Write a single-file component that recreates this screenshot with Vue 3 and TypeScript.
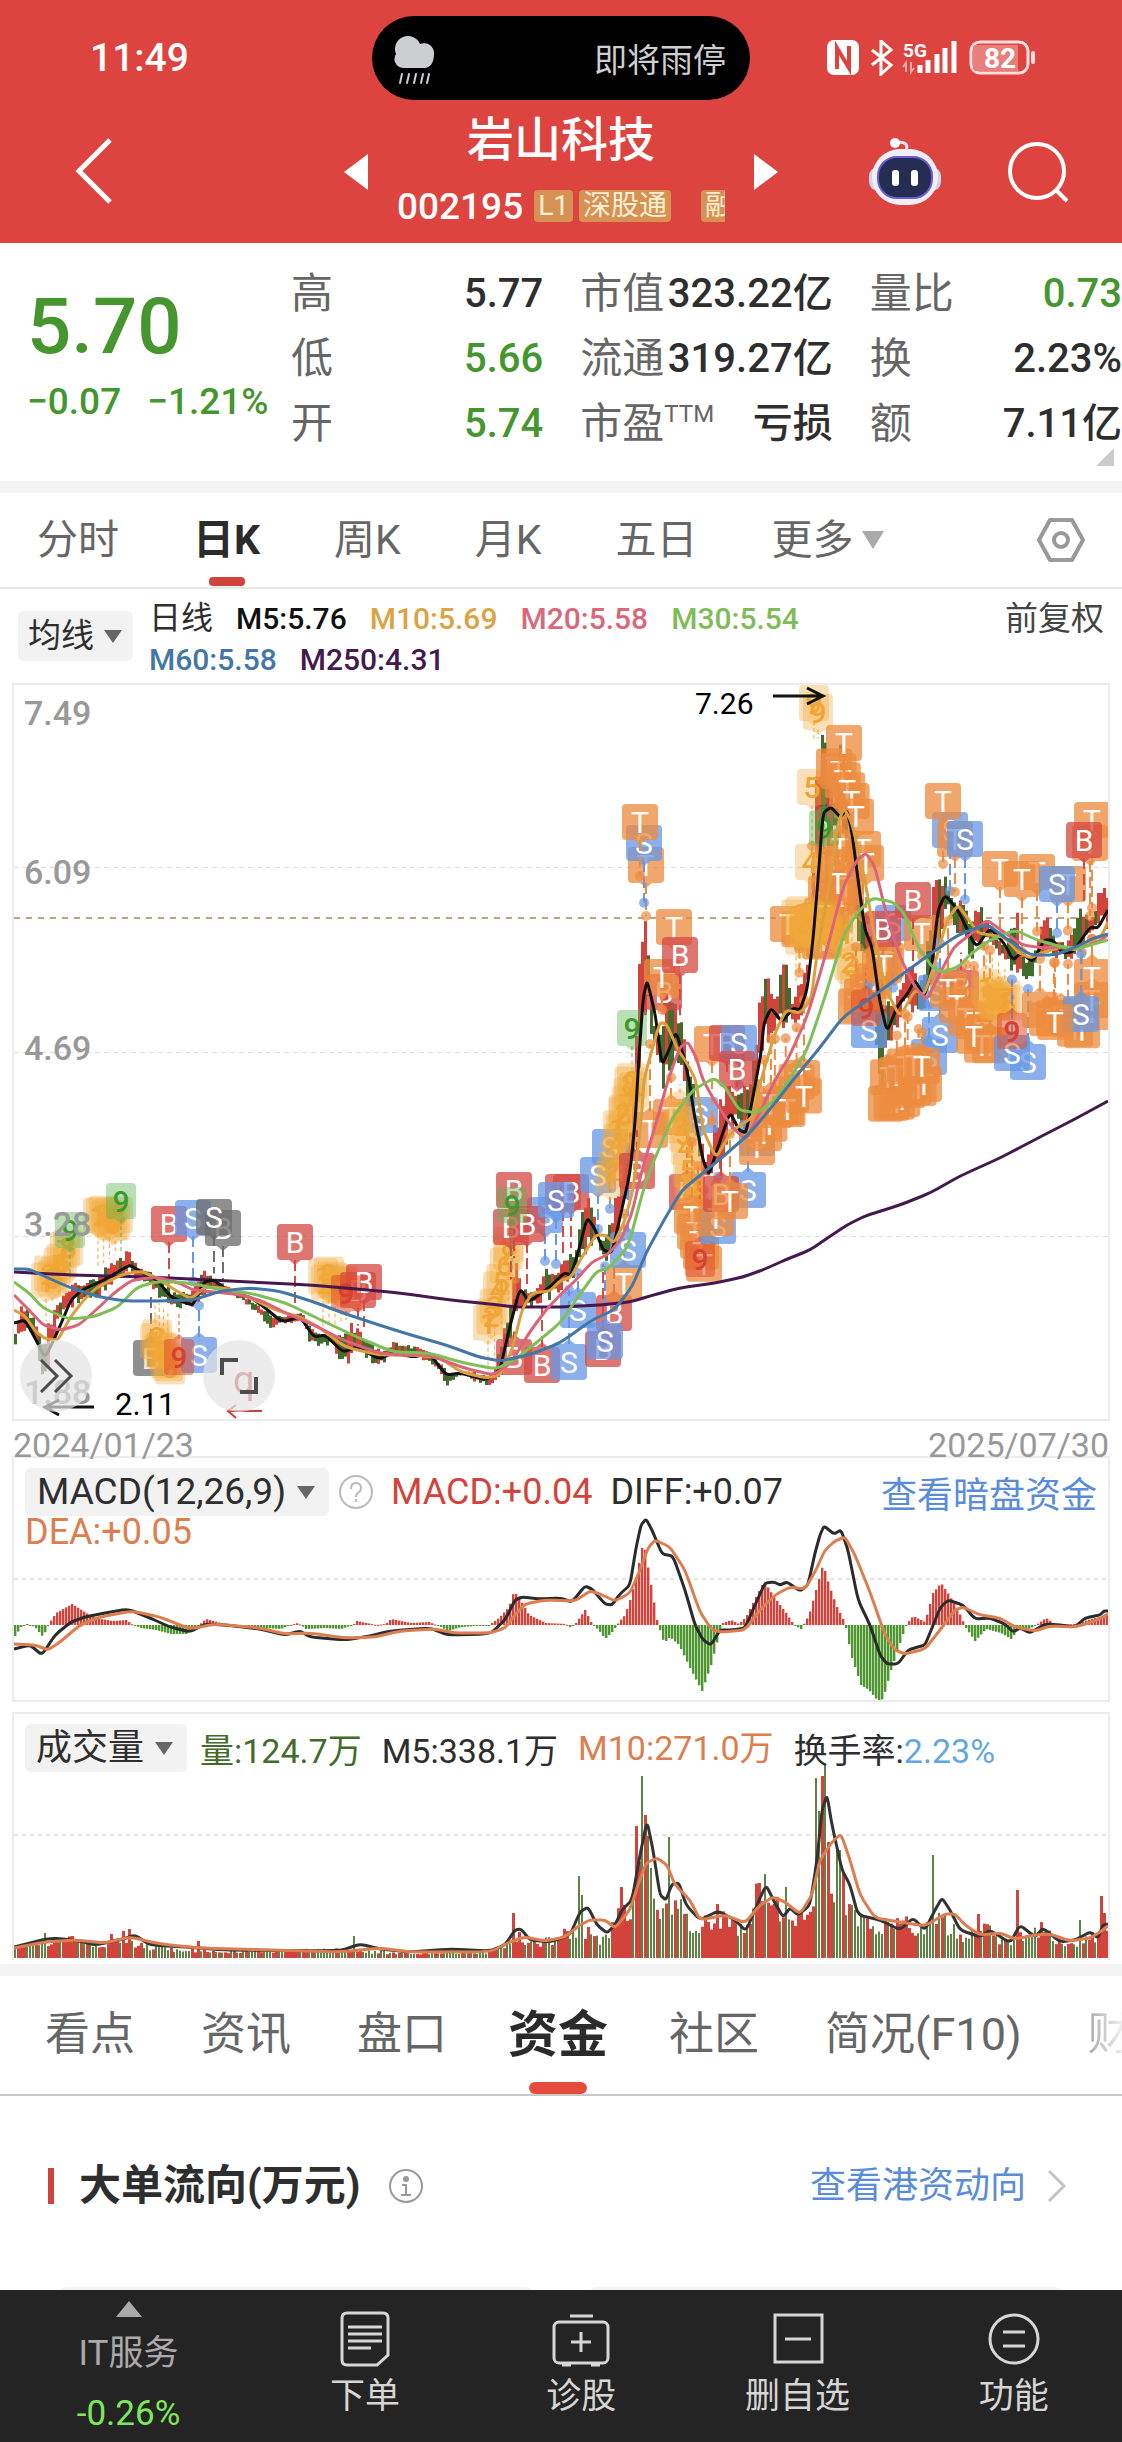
<script setup lang="ts">
type Point = [number, number]
type Kind = 'trade' | 'buy' | 'sell' | 'gray' | 'count' | 'up' | 'down'
interface Pin { x: number; y: number; label: string; kind: Kind; stem: boolean }

/* Turns "x,y x,y ..." into points. */
const parse = (text: string): Point[] =>
  text.trim().split(/\s+/).map((pair) => pair.split(',').map(Number) as Point)

const at = (points: Point[], x: number): number => {
  if (x <= points[0][0]) return points[0][1]
  for (let i = 1; i < points.length; i++) {
    const [x1, y1] = points[i]
    if (x <= x1) {
      const [x0, y0] = points[i - 1]
      return y0 + ((y1 - y0) * (x - x0)) / (x1 - x0)
    }
  }
  return points[points.length - 1][1]
}

const noise = (seed: number): number => {
  const v = Math.sin(seed * 127.1 + 11.7) * 43758.5453
  return v - Math.floor(v)
}

/* Smooths a series with short quadratic joins at its corners. */
const curve = (points: Point[]): string => {
  let d = `M${points[0][0]} ${points[0][1]}`
  for (let i = 1; i < points.length - 1; i++) {
    const [px, py] = points[i - 1]
    const [x, y] = points[i]
    const [nx, ny] = points[i + 1]
    d += ` L${(x * 3 + px) / 4} ${(y * 3 + py) / 4} Q${x} ${y} ${(x * 3 + nx) / 4} ${(y * 3 + ny) / 4}`
  }
  const last = points[points.length - 1]
  return `${d} L${last[0]} ${last[1]}`
}

const ma5 = parse(`14,1323 25,1320 36,1340 45,1358 57,1333 71,1300 82,1290 104,1280 121,1270 130,1265 143,1273 157,1280 171,1297 186,1303 193,1305 204,1282 214,1280 229,1292 250,1297 264,1307 282,1322 300,1317 314,1337 325,1335 343,1352 357,1347 379,1359 393,1353 414,1357 429,1353 446,1375 461,1373 486,1380 500,1370 509,1330 520,1288 529,1302 550,1287 564,1273 571,1275 578,1253 587,1218 594,1227 603,1250 612,1253 621,1213 630,1173 635,1123 639,1057 643,1000 647,980 655,1013 662,1065 669,1050 676,1032 684,1057 689,1080 694,1113 703,1160 709,1175 718,1147 730,1112 739,1130 746,1133 753,1097 761,1053 764,1023 771,1008 782,1022 793,1008 800,1010 807,990 813,940 818,880 823,813 831,807 840,817 847,810 852,833 859,887 865,930 872,947 879,997 887,1032 897,1007 908,993 915,980 924,997 931,973 938,910 945,895 958,910 976,948 990,928 1004,943 1013,960 1021,953 1033,962 1044,940 1053,940 1062,953 1073,952 1090,927 1098,928 1108,910`)
const ma10 = parse(`14,1310 25,1316 36,1332 46,1339 58,1340 70,1318 82,1302 96,1288 121,1275 140,1271 157,1278 175,1290 191,1299 205,1287 225,1288 250,1298 275,1310 300,1317 320,1328 345,1347 379,1355 414,1355 440,1358 461,1372 486,1378 500,1375 512,1350 522,1310 532,1293 550,1291 560,1281 571,1277 582,1257 596,1235 605,1235 614,1243 624,1223 633,1190 641,1123 644,1080 650,1057 660,1022 667,1025 678,1050 685,1060 696,1080 703,1130 716,1158 728,1137 736,1128 753,1117 761,1080 775,1033 786,1010 800,1013 811,1000 818,947 829,887 838,823 844,808 852,823 865,880 875,940 886,990 900,1017 915,990 924,995 935,963 947,920 958,905 969,920 978,933 990,935 1004,937 1019,953 1030,958 1044,952 1062,947 1076,950 1090,940 1101,937 1108,922`)
const ma20 = parse(`14,1295 29,1310 43,1325 61,1330 79,1325 96,1310 114,1293 132,1280 157,1277 179,1283 193,1290 214,1292 243,1295 264,1302 286,1313 314,1325 343,1340 379,1353 400,1355 429,1355 464,1368 493,1375 511,1363 529,1333 546,1310 560,1295 574,1282 592,1262 607,1255 621,1240 632,1213 642,1170 657,1120 668,1080 680,1047 688,1042 696,1057 703,1080 714,1100 732,1127 746,1140 761,1110 775,1080 789,1057 807,1017 825,957 843,887 857,860 866,853 875,867 886,913 900,957 915,987 927,1000 940,973 954,947 972,933 987,920 1001,930 1022,945 1044,948 1062,947 1080,948 1098,942 1108,935`)
const ma30 = parse(`14,1282 29,1293 43,1308 68,1319 93,1317 118,1307 136,1288 154,1282 179,1282 200,1285 221,1290 250,1293 286,1303 321,1320 357,1337 393,1352 429,1353 464,1363 496,1369 514,1360 536,1343 560,1323 578,1297 596,1272 610,1267 628,1247 646,1180 671,1120 693,1090 714,1078 725,1087 739,1110 757,1113 775,1100 789,1080 807,1050 825,997 843,937 857,913 872,898 893,902 904,913 918,947 933,968 943,972 958,967 972,953 990,940 1015,930 1037,940 1062,947 1080,948 1108,940`)
const ma60 = parse(`14,1269 29,1269 46,1277 71,1288 100,1297 125,1301 157,1301 193,1300 221,1291 250,1288 279,1291 314,1302 343,1313 379,1325 411,1335 446,1345 479,1357 500,1361 529,1355 560,1343 592,1320 614,1310 632,1287 646,1253 664,1220 682,1190 703,1173 725,1155 750,1133 775,1103 793,1080 818,1050 843,1017 875,995 904,973 933,952 958,935 987,924 1004,937 1030,955 1055,955 1076,947 1094,938 1108,934`)
const ma250 = parse(`14,1272 71,1275 150,1277 230,1281 310,1285 357,1289 400,1293 450,1300 490,1304 515,1307 560,1307 600,1305 630,1302 650,1296 679,1288 715,1283 743,1277 765,1269 785,1260 810,1250 829,1237 847,1225 865,1216 900,1205 930,1193 960,1176 1000,1158 1040,1137 1075,1119 1108,1101`)
const highs = parse(`14,1330 20,1305 30,1312 42,1340 50,1310 71,1280 85,1283 100,1270 121,1255 128,1242 135,1265 150,1270 171,1290 190,1290 203,1270 225,1285 250,1300 275,1315 300,1312 320,1335 350,1322 379,1350 392,1341 425,1349 446,1370 470,1371 492,1375 502,1330 508,1305 515,1255 522,1290 535,1285 545,1265 556,1268 566,1255 575,1250 580,1195 587,1195 600,1240 607,1230 614,1190 628,1130 635,1010 637,950 640,880 643,900 646,920 652,1020 660,1030 667,973 673,994 683,1030 695,1100 705,1160 715,1110 721,1090 730,1075 740,1090 752,1060 758,996 764,960 772,995 784,957 790,1000 806,960 812,850 814,745 820,742 824,712 828,780 834,790 838,740 842,750 848,830 856,870 862,920 872,930 880,990 888,1000 900,980 910,955 917,985 930,920 932,865 940,880 943,868 950,895 960,897 970,910 980,905 990,930 1005,945 1015,900 1020,955 1030,960 1040,925 1045,908 1055,935 1065,945 1078,900 1090,920 1100,880 1108,890`)
const lows = parse(`14,1345 25,1330 36,1350 42,1388 48,1370 57,1320 71,1308 95,1300 121,1280 150,1290 170,1310 193,1308 210,1290 240,1300 270,1330 285,1325 300,1320 310,1350 330,1345 340,1372 357,1352 373,1366 400,1357 429,1362 446,1387 460,1376 485,1387 500,1380 508,1345 520,1310 530,1310 550,1300 570,1285 580,1265 594,1240 603,1260 612,1270 620,1230 632,1170 640,1100 645,1020 655,1060 663,1095 676,1060 690,1130 705,1190 716,1180 730,1130 745,1150 757,1080 770,1035 785,1035 800,1020 810,960 820,850 830,850 845,850 858,960 868,965 878,1120 886,1060 905,1010 923,1030 933,980 945,910 970,970 985,940 1005,965 1015,980 1028,985 1040,955 1060,960 1075,960 1090,935 1108,935`)
const macdBars = parse(`14,-11 20,-2 26,1 34,-2 42,-12 47,0 55,12 71,21 82,14 90,9 100,6 112,4 125,5 132,0 140,-3 155,-5 170,-9 185,-9 198,0 205,6 220,2 250,-2 280,-4 286,-1 297,2 305,-4 325,-3 340,-4 352,0 356,4 375,0 385,1 390,6 410,2 428,3 440,-2 447,-6 460,-2 488,0 498,7 508,18 513,34 520,24 528,10 545,2 565,1 570,-3 575,2 584,15 590,3 600,-8 604,-14 612,-6 618,3 624,10 630,28 636,52 641,77 644,75 650,40 656,5 658,-2 663,-18 669,-12 678,-20 690,-45 701,-66 710,-40 718,-10 722,2 730,5 738,1 745,8 752,22 763,44 773,28 785,12 793,0 800,-4 808,10 815,35 822,61 828,40 835,20 842,6 845,-3 850,-30 860,-60 868,-65 877,-76 882,-74 890,-45 900,-15 905,0 912,9 924,3 932,32 940,42 948,30 957,15 965,-3 974,-16 985,-4 1000,-8 1010,-14 1017,-5 1030,-3 1038,2 1045,7 1055,0 1075,1 1090,6 1108,10`)
const diff = parse(`14,1649 30,1645 42,1655 55,1635 71,1622 85,1617 105,1613 128,1609 150,1618 170,1627 190,1632 205,1624 225,1625 260,1629 285,1635 300,1631 310,1637 345,1640 370,1636 390,1631 430,1628 448,1635 490,1634 505,1620 515,1600 522,1597 540,1599 560,1598 572,1602 585,1586 592,1589 605,1604 612,1605 620,1594 630,1585 636,1548 641,1525 646,1519 652,1530 662,1554 673,1556 685,1590 695,1625 703,1640 711,1645 720,1630 733,1630 745,1628 755,1605 765,1583 774,1582 780,1585 787,1582 800,1591 808,1585 815,1553 820,1535 824,1526 834,1534 841,1530 848,1550 858,1600 870,1625 880,1655 887,1664 898,1664 908,1650 918,1647 925,1645 932,1628 940,1608 948,1600 963,1605 975,1619 990,1618 1005,1624 1013,1632 1020,1628 1030,1633 1045,1624 1060,1625 1075,1627 1085,1618 1100,1615 1104,1611 1108,1611`)
const dea = parse(`14,1644 35,1645 48,1650 60,1642 80,1625 100,1617 132,1611 160,1617 190,1629 215,1624 260,1628 285,1634 310,1633 345,1638 375,1637 400,1631 435,1629 455,1633 490,1633 505,1628 515,1615 525,1604 545,1600 575,1601 590,1591 600,1594 615,1601 630,1593 640,1570 648,1548 655,1540 670,1547 685,1570 700,1612 712,1630 722,1632 745,1630 760,1610 775,1595 790,1587 805,1589 815,1572 825,1550 835,1541 845,1537 855,1555 870,1592 885,1635 895,1650 905,1654 925,1649 940,1630 955,1610 963,1607 980,1615 1000,1618 1015,1627 1035,1631 1050,1626 1075,1627 1095,1621 1108,1614`)
const volBase = parse(`14,12 30,15 70,20 85,12 120,17 140,12 190,8 240,7 340,8 400,5 490,6 505,14 520,22 530,15 560,22 575,30 590,28 600,18 615,40 630,60 640,90 650,75 660,50 670,65 685,40 695,28 715,48 735,30 745,28 755,60 770,60 785,40 795,36 808,55 816,90 824,110 832,85 845,65 860,38 885,32 910,35 918,22 935,45 950,30 965,20 985,30 1005,15 1025,25 1045,30 1055,14 1075,15 1090,20 1108,35`)
const volSpikes: Record<number, number> = { 44: 25, 110: 24, 122: 27, 128: 29, 197: 17, 353: 22, 512: 45, 578: 82, 581: 63, 620: 71, 635: 132, 641: 182, 644: 143, 647: 122, 650: 90, 668: 121, 758: 75, 764: 84, 785: 71, 815: 180, 818: 147, 821: 182, 824: 194, 827: 116, 836: 110, 839: 108, 932: 103, 977: 44, 1016: 68, 1079: 38, 1100: 62, 1103: 45 }
const volM5 = parse(`14,1947 50,1938 75,1940 95,1945 120,1940 135,1935 150,1945 185,1947 225,1950 340,1951 360,1944 380,1949 410,1952 450,1949 490,1951 505,1945 515,1930 521,1929 530,1940 550,1942 570,1935 580,1912 588,1907 597,1925 607,1933 615,1925 622,1910 632,1900 640,1855 647,1821 653,1850 660,1895 666,1900 672,1884 679,1883 686,1905 700,1920 718,1911 735,1920 746,1931 757,1905 766,1885 775,1903 783,1917 790,1908 798,1915 810,1905 817,1860 822,1810 827,1795 832,1825 842,1870 850,1885 858,1915 880,1920 900,1930 913,1918 925,1930 935,1910 942,1898 950,1910 960,1930 980,1937 990,1930 1010,1943 1020,1925 1035,1937 1043,1928 1060,1942 1075,1940 1090,1932 1098,1938 1103,1925 1108,1924`)
const volM10 = parse(`14,1948 45,1942 75,1940 105,1943 130,1937 160,1944 200,1948 270,1950 340,1952 380,1948 410,1952 490,1952 510,1942 525,1937 545,1941 565,1937 580,1925 590,1920 605,1920 615,1928 630,1910 638,1885 646,1863 657,1858 667,1865 675,1885 690,1900 700,1920 725,1915 745,1923 760,1905 773,1897 785,1902 800,1914 812,1895 820,1860 832,1842 841,1834 850,1860 860,1895 875,1918 900,1922 925,1926 945,1914 955,1914 965,1925 980,1935 1000,1933 1015,1939 1035,1935 1050,1934 1070,1941 1090,1938 1100,1932 1108,1926`)

const days = Array.from({ length: 365 }, (_, i) => 14 + i * 3)
const isUp = (x: number) => noise(x) < (at(ma5, x + 4) < at(ma5, x - 4) ? 0.72 : 0.34)

const candles = days.map((x, i) => {
  const top = at(highs, x)
  const bottom = Math.max(at(lows, x), top + 6)
  const span = bottom - top
  return { x, y: top + span * noise(i + 400) * 0.3, b: bottom - span * noise(i + 900) * 0.4, up: isUp(x) }
})
const histogram = days.map((x) => ({ x, v: at(macdBars, x) }))
const volumes = days.map((x, i) => ({
  x,
  v: volSpikes[x] ?? at(volBase, x) * (0.65 + noise(i + 70) * 0.6),
  up: [641, 668, 815, 818, 824, 578, 932].includes(x) ? false : [635, 644, 821].includes(x) || isUp(x),
}))

const averages = [
  { d: curve(ma250), color: '#45184f' },
  { d: curve(ma5), color: '#111' },
  { d: curve(ma10), color: '#dba03c' },
  { d: curve(ma20), color: '#dc6478' },
  { d: curve(ma30), color: '#7fbf58' },
  { d: curve(ma60), color: '#4476a6' },
]

/* Runs of overlapping markers between two places. */
const run = (kind: Kind, labels: string, x0: number, y0: number, x1: number, y1: number): Pin[] =>
  [...labels].map((label, i) => {
    const t = labels.length > 1 ? i / (labels.length - 1) : 0
    return { x: x0 + (x1 - x0) * t, y: y0 + (y1 - y0) * t + (noise(x0 + i) - 0.5) * 14, label, kind, stem: i % 2 === 0 }
  })

const marks = (kind: Kind, label: string, places: string): Pin[] =>
  parse(places).map(([x, y]) => ({ x, y, label, kind, stem: true }))

const pins: Pin[] = [
  ...run('count', '12345678', 46, 1284, 68, 1246),
  ...run('count', '12345678', 98, 1220, 118, 1216),
  ...marks('gray', 'B', '151,1358'),
  ...run('count', '12345678', 155, 1338, 170, 1368),
  ...run('count', '12345678', 323, 1276, 344, 1286),
  ...run('count', '1234567', 488, 1325, 508, 1252),
  ...run('count', '8', 509, 1240, 509, 1240),
  ...marks('up', '9', '70,1230 121,1201'),
  ...marks('buy', 'B', '169,1224'),
  ...marks('sell', 'S', '193,1218 199,1355 545,1215'),
  ...marks('gray', 'B', '223,1228'),
  ...marks('gray', 'S', '214,1217'),
  ...marks('buy', 'B', '295,1242 358,1290 364,1282'),
  ...marks('down', '9', '179,1357 346,1293'),
  ...marks('buy', 'B', '514,1190 511,1227 527,1224 514,1357 542,1365 563,1192 571,1192'),
  ...marks('up', '9', '512,1205'),
  ...marks('sell', 'S', '556,1200 578,1310 569,1362 610,1147 598,1175 700,1115'),
  ...run('count', '123456789', 610, 1180, 632, 1078),
  ...run('count', '1234', 618, 1125, 634, 1085),
  ...marks('trade', 'T', '650,1130 671,1117'),
  ...marks('buy', 'B', '637,1171 614,1313 603,1349 664,992'),
  ...marks('trade', 'T', '624,1283'),
  ...marks('sell', 'S', '628,1250 605,1341'),
  ...marks('trade', 'T', '646,865'),
  ...marks('sell', 'S', '644,843'),
  ...marks('trade', 'T', '640,822 674,927 662,977'),
  ...marks('buy', 'B', '680,955 687,1192'),
  ...marks('up', '9', '632,1028'),
  ...run('count', '12345678', 680, 1110, 694, 1210),
  ...run('trade', 'TTTTT', 692, 1215, 704, 1262),
  ...marks('down', '9', '700,1259'),
  ...marks('sell', 'S', '748,1190 718,1226 757,1138'),
  ...marks('trade', 'T', '716,1218 712,1044'),
  ...marks('buy', 'B', '721,1194 727,1043'),
  ...marks('trade', 'T', '730,1201 757,1147'),
  ...marks('sell', 'S', '739,1043'),
  ...marks('buy', 'B', '737,1069'),
  ...run('trade', 'TTTTTTTT', 764, 1130, 802, 1080),
  ...run('trade', 'TTT', 771, 1106, 804, 1102),
  ...run('trade', 'TTTTT', 812, 935, 840, 850),
  ...run('trade', 'TTTTTTTT', 820, 940, 846, 890),
  ...run('trade', 'TTTT', 822, 918, 788, 930),
  ...run('count', '12345678', 796, 912, 828, 936),
  ...run('count', '345678', 800, 936, 826, 914),
  ...marks('trade', 'T', '838,883'),
  ...marks('count', '4', '810,862'),
  ...marks('count', '5', '812,787'),
  ...marks('count', '9', '814,703 818,712'),
  ...run('trade', 'TTTTTT', 834, 760, 856, 812),
  ...marks('trade', 'T', '844,743 863,849 866,863'),
  ...marks('up', '9', '824,828'),
  ...run('count', '12345', 846, 940, 858, 1000),
  ...run('trade', 'TTTTTT', 856, 1004, 886, 960),
  ...marks('sell', 'S', '869,1030 893,923'),
  ...marks('buy', 'B', '883,929'),
  ...marks('down', '9', '866,1008'),
  ...marks('trade', 'T', '922,933 884,965'),
  ...marks('buy', 'B', '913,900'),
  ...marks('sell', 'S', '929,1057 936,993 940,1035'),
  ...run('trade', 'TTTTTTTT', 886, 1107, 924, 1078),
  ...run('trade', 'TTTTT', 888, 1074, 922, 1060),
  ...marks('sell', 'S', '950,830'),
  ...marks('trade', 'T', '955,839 943,801'),
  ...marks('sell', 'S', '965,839'),
  ...marks('buy', 'B', '961,988'),
  ...run('trade', 'TTTTT', 948, 996, 984, 1030),
  ...run('trade', 'TTT', 990, 1046, 974, 1042),
  ...run('count', '12345678', 986, 990, 1008, 1006),
  ...marks('trade', 'T', '1000,869 1037,872 1022,879'),
  ...marks('trade', 'T', '1068,884'),
  ...marks('sell', 'S', '1057,884 1028,1062 1012,1053'),
  ...marks('down', '9', '1012,1031'),
  ...run('trade', 'TTTTTTT', 1040, 1008, 1082, 1030),
  ...marks('trade', 'T', '1092,1012 1092,1000 1092,977'),
  ...marks('sell', 'S', '1081,1014'),
  ...marks('trade', 'T', '1055,1022 1090,843 1092,820'),
  ...marks('buy', 'B', '1084,840'),
]

const fills: Record<Kind, string> = {
  trade: '#ed8c3f', buy: '#d64a45', sell: '#6798e6', gray: '#6d6d6d', count: '#f2aa3c', up: '#5ab450', down: '#e0512f',
}
const inks: Record<Kind, string> = {
  trade: '#fff', buy: '#fff', sell: '#fff', gray: '#fff', count: '#f0a433', up: '#3a9a2d', down: '#d9402f',
}
const isCount = (k: Kind) => k === 'count' || k === 'up' || k === 'down'
const half = (k: Kind) => (isCount(k) ? 15 : 18)
const fade = (k: Kind) => (k === 'count' ? 0.36 : k === 'up' ? 0.42 : k === 'down' ? 0.55 : 0.76)
const below = (p: Pin) => p.y > at(ma5, p.x)
const stemEnd = (p: Pin) => (below(p) ? at(lows, p.x) + 4 : at(highs, p.x) - 4)
const notch = (p: Pin) => {
  const s = below(p) ? -1 : 1
  return `M${p.x - 6} ${p.y + 18 * s} h12 l-6 ${5 * s} z`
}

const quotes = [
  [{ k: '高', v: '5.77', c: '' }, { k: '低', v: '5.66', c: 'green' }, { k: '开', v: '5.74', c: 'green' }],
  [{ k: '市值', v: '323.22亿', c: '' }, { k: '流通', v: '319.27亿', c: '' }, { k: '市盈', sup: 'TTM', v: '亏损', c: '' }],
  [{ k: '量比', v: '0.73', c: 'green' }, { k: '换', v: '2.23%', c: '' }, { k: '额', v: '7.11亿', c: '' }],
]
const periods = ['分时', '日K', '周K', '月K', '五日']
const sections = ['看点', '资讯', '盘口', '资金', '社区', '简况(F10)', '财务']
const axis = [
  { y: 725, t: '7.49' }, { y: 884, t: '6.09' }, { y: 1060, t: '4.69' }, { y: 1236, t: '3.28' }, { y: 1404, t: '1.88' },
]
</script>

<template>
  <div class="page">
    <header class="top">
      <div class="status">
        <span class="clock">11:49</span>
        <div class="island">
          <svg width="40" height="60" viewBox="0 0 40 60">
            <path d="M9 40a9 9 0 0 1-7-14A13 13 0 0 1 26 16a10 10 0 0 1 14 10c0 9-4 14-10 14z" fill="#cdced2" />
            <path d="M8 46l-2 9M15 46l-2 9M22 46l-2 9M29 46l-2 9M35 46l-2 9" stroke="#cdced2" stroke-width="2" stroke-linecap="round" />
          </svg>
          <span>即将雨停</span>
        </div>
        <svg class="signals" width="210" height="36" viewBox="0 0 210 36">
          <rect x="1" y="0" width="32" height="35" rx="7" fill="#fff" />
          <path d="M11 29V8l12 20V6" fill="none" stroke="#dd4440" stroke-width="4" />
          <path d="M46 10l19 15-10 9V1l10 9-19 15" fill="none" stroke="#fff" stroke-width="3" />
          <text x="77" y="17" font-size="19" font-weight="700" fill="#fff">5G</text>
          <path d="M80 32v-9l-3 4M85 22v10l3-4" fill="none" stroke="#f0aaa8" stroke-width="2" />
          <path d="M94 33v-8M102 33V20M111 33V14M119 33V8M128 33V1" stroke="#fff" stroke-width="5" />
          <rect x="145" y="2" width="57" height="31" rx="9" fill="none" stroke="#fbdedd" stroke-width="3" />
          <path d="M150 5h42v26h-42q-3 0-3-3V8q0-3 3-3" fill="#e87f7c" />
          <rect x="205" y="11" width="4" height="13" rx="2" fill="#fbdedd" />
          <text x="174" y="28" font-size="28" font-weight="700" text-anchor="middle" fill="#fff">82</text>
        </svg>
      </div>
      <div class="bar">
        <button class="plain back" aria-label="返回">
          <svg width="40" height="68" viewBox="0 0 40 68"><path d="M36 2L5 33l31 31" fill="none" stroke="#fff" stroke-width="5" /></svg>
        </button>
        <div class="stock">
          <button class="plain" aria-label="上一只">
            <svg width="24" height="36" viewBox="0 0 24 36"><path d="M24 0v36L0 18z" fill="#fff" /></svg>
          </button>
          <div class="name">
            <h1>岩山科技</h1>
            <div class="code"><span>002195</span><i>L1</i><i>深股通</i><i class="cut">融资</i></div>
          </div>
          <button class="plain" aria-label="下一只">
            <svg width="24" height="36" viewBox="0 0 24 36"><path d="M0 0v36l24-18z" fill="#fff" /></svg>
          </button>
        </div>
        <div class="tools">
          <button class="plain" aria-label="智能助手">
            <svg width="74" height="70" viewBox="0 0 74 70">
              <path d="M38 14c3-8-2-9-10-9" fill="none" stroke="#e9e6f6" stroke-width="3" />
              <circle cx="27" cy="6" r="5" fill="#fff" />
              <rect x="1" y="30" width="72" height="24" rx="9" fill="#ccd2f0" />
              <rect x="4" y="12" width="66" height="56" rx="28" fill="#f1effb" />
              <rect x="10" y="20" width="54" height="41" rx="19" fill="#262d52" stroke="#6a5bd8" stroke-width="2" />
              <rect x="24" y="33" width="7" height="16" rx="3" fill="#fff" />
              <rect x="43" y="33" width="7" height="16" rx="3" fill="#fff" />
            </svg>
          </button>
          <button class="plain" aria-label="搜索">
            <svg width="62" height="62" viewBox="0 0 62 62" fill="none" stroke="#fff" stroke-width="4"><circle cx="30" cy="30" r="27" /><path d="M49 49l11 11" /></svg>
          </button>
        </div>
      </div>
    </header>

    <section class="quote">
      <div class="now">
        <strong>5.70</strong>
        <div><span>−0.07</span><span>−1.21%</span></div>
      </div>
      <dl v-for="(col, i) in quotes" :key="i">
        <div v-for="q in col" :key="q.k">
          <dt>{{ q.k }}<sup v-if="'sup' in q">{{ q.sup }}</sup></dt>
          <dd :class="q.c">{{ q.v }}</dd>
        </div>
      </dl>
      <svg class="corner" width="18" height="18" viewBox="0 0 18 18"><path d="M18 0v18H0z" fill="#ccc" /></svg>
    </section>

    <nav class="periods">
      <button v-for="p in periods" :key="p" class="plain" :class="{ on: p === '日K' }">{{ p }}</button>
      <button class="plain more" aria-haspopup="menu">更多<svg width="22" height="18" viewBox="0 0 22 18"><path d="M0 0h22L11 18z" fill="#aaa" /></svg></button>
      <button class="plain set" aria-label="设置">
        <svg width="50" height="46" viewBox="0 0 50 46" fill="none" stroke="#999" stroke-width="4"><path d="M14 3h22l11 20-11 20H14L3 23z" stroke-linejoin="round" /><circle cx="25" cy="23" r="7" /></svg>
      </button>
    </nav>

    <div class="legend">
      <label class="pick small"><select aria-label="主图指标"><option>均线</option></select><svg width="18" height="13" viewBox="0 0 18 13"><path d="M0 0h18L9 13z" fill="#666" /></svg></label>
      <p>
        <span class="kind">日线</span><span class="m5">M5:5.76</span><span class="m10">M10:5.69</span><span class="m20">M20:5.58</span><span class="m30">M30:5.54</span>
        <span class="m60">M60:5.58</span><span class="m250">M250:4.31</span>
      </p>
      <button class="plain">前复权</button>
    </div>

    <section class="box price">
      <svg viewBox="14 685 1094 734">
        <g stroke="#dedede" stroke-width="1" stroke-dasharray="5 4">
          <path d="M14 867.5H1108M14 1052.5H1108M14 1236.5H1108" />
        </g>
        <path d="M14 918H1108" stroke="#b9a67c" stroke-width="2" stroke-dasharray="6 6" />
        <rect v-for="c in candles" :key="c.x" :x="c.x" :y="c.y" width="3" :height="Math.max(c.b - c.y, 3)" :fill="c.up ? '#d2443b' : '#436b2c'" />
        <g v-for="(p, i) in pins" :key="i">
          <g v-if="p.stem">
            <line :x1="p.x" :x2="p.x" :y1="p.y + (below(p) ? -18 : 18)" :y2="stemEnd(p)" :stroke="fills[p.kind]" :stroke-width="isCount(p.kind) ? 1 : 2" :stroke-dasharray="isCount(p.kind) ? '4 3' : '11 5'" />
            <circle v-if="p.kind === 'trade' || p.kind === 'sell'" :cx="p.x" :cy="stemEnd(p)" r="5" :fill="fills[p.kind]" opacity=".7" />
          </g>
          <g :opacity="fade(p.kind)" :fill="fills[p.kind]">
            <rect :x="p.x - half(p.kind)" :y="p.y - 18" :width="half(p.kind) * 2" height="36" rx="4" />
            <path :d="notch(p)" />
          </g>
          <text :x="p.x" :y="p.y + 11" font-size="30" :font-weight="isCount(p.kind) ? 500 : 400" text-anchor="middle" :fill="inks[p.kind]">{{ p.label }}</text>
        </g>
        <text v-for="a in axis" :key="a.t" x="24" :y="a.y" font-size="34" font-weight="500" fill="#999">{{ a.t }}</text>
        <path v-for="m in averages" :key="m.color" :d="m.d" fill="none" :stroke="m.color" stroke-width="3" stroke-linejoin="round" />
        <g fill="none" stroke="#111" stroke-width="3">
          <path d="M773 696h50M807 688l16 8-16 8" />
          <path d="M94 1407H45M59 1400l-14 7 14 8" />
        </g>
        <text x="695" y="714" font-size="30">7.26</text>
        <text x="115" y="1415" font-size="31">2.11</text>
        <path d="M262 1411h-34M236 1405l-8 6 8 7" fill="none" stroke="#c9423d" stroke-width="2" />
        <text x="233" y="1393" font-size="38" fill="#c9423d">q</text>
      </svg>
      <div class="floats">
        <button class="plain round" aria-label="展开">
          <svg width="36" height="36" viewBox="0 0 36 36" fill="none" stroke="#4c4c4c" stroke-width="3"><path d="M3 2l16 16L3 34M17 2l16 16-16 16" /></svg>
        </button>
        <button class="plain round" aria-label="全屏">
          <svg width="38" height="38" viewBox="0 0 38 38" fill="none" stroke="#4c4c4c" stroke-width="4"><path d="M2 18V3h16M36 20v15H20" /></svg>
        </button>
      </div>
    </section>
    <div class="dates"><time>2024/01/23</time><time>2025/07/30</time></div>

    <section class="box">
      <svg viewBox="14 1458 1094 242">
        <path d="M14 1579H1108" stroke="#e4e4e4" stroke-width="2" stroke-dasharray="4 4" />
        <rect v-for="h in histogram" :key="h.x" :x="h.x" :y="h.v > 0 ? 1625 - h.v : 1625" width="2.4" :height="Math.max(Math.abs(h.v), 1)" :fill="h.v > 0 ? '#d2443b' : '#4e9730'" />
        <path :d="curve(diff)" fill="none" stroke="#2b2b2b" stroke-width="3" />
        <path :d="curve(dea)" fill="none" stroke="#dd7e50" stroke-width="3" />
      </svg>
      <div class="over">
        <div class="line">
          <label class="pick"><select aria-label="副图指标"><option>MACD(12,26,9)</option></select><svg width="18" height="13" viewBox="0 0 18 13"><path d="M0 0h18L9 13z" fill="#666" /></svg></label>
          <button class="plain help" aria-label="说明">
            <svg width="36" height="36" viewBox="0 0 36 36" fill="none" stroke="#bbb" stroke-width="2"><circle cx="18" cy="18" r="16" /><path d="M13 15q0-6 5-6t5 5q0 3-3 5-2 1-2 4M18 25v3" /></svg>
          </button>
          <span class="red">MACD:+0.04</span><span>DIFF:+0.07</span>
          <a href="#dark">查看暗盘资金</a>
        </div>
        <span class="orange">DEA:+0.05</span>
      </div>
    </section>

    <section class="box volume">
      <svg viewBox="14 1714 1094 246">
        <path d="M14 1835H1108" stroke="#e4e4e4" stroke-width="2" stroke-dasharray="4 4" />
        <rect v-for="v in volumes" :key="v.x" :x="v.x" :y="1958 - v.v" :width="v.up ? 3 : 2" :height="v.v" :fill="v.up ? '#d2443b' : '#5d8445'" />
        <path :d="curve(volM5)" fill="none" stroke="#333" stroke-width="3" />
        <path :d="curve(volM10)" fill="none" stroke="#dd7e50" stroke-width="3" />
      </svg>
      <div class="over">
        <div class="line vol">
          <label class="pick"><select aria-label="成交量指标"><option>成交量</option></select><svg width="18" height="13" viewBox="0 0 18 13"><path d="M0 0h18L9 13z" fill="#666" /></svg></label>
          <span class="dark">量:124.7万</span><span>M5:338.1万</span><span class="orange">M10:271.0万</span><span>换手率:<b>2.23%</b></span>
        </div>
      </div>
    </section>

    <nav class="sections">
      <button v-for="s in sections" :key="s" class="plain" :class="{ on: s === '资金', last: s === '财务' }">{{ s }}</button>
    </nav>

    <section class="flow">
      <h2>大单流向(万元)</h2>
      <button class="plain" aria-label="说明">
        <svg width="36" height="36" viewBox="0 0 36 36" fill="none" stroke="#999" stroke-width="2"><circle cx="18" cy="18" r="16" /><circle cx="18" cy="11" r="2" fill="#999" /><path d="M14 17h4v10M13 27h10" /></svg>
      </button>
      <a href="#hk">查看港资动向<svg width="20" height="34" viewBox="0 0 20 34"><path d="M2 2l15 15L2 32" fill="none" stroke="#c4c4c4" stroke-width="3" /></svg></a>
    </section>
    <div class="cards"><div /><div /></div>

    <nav class="dock">
      <button class="plain index">
        <svg width="26" height="16" viewBox="0 0 26 16"><path d="M13 0l13 16H0z" fill="#aaa" /></svg>
        <span>IT服务</span><em>-0.26%</em>
      </button>
      <button class="plain">
        <svg width="60" height="56" viewBox="0 0 60 56" fill="none" stroke="#d6d6d6" stroke-width="3"><path d="M12 2h36q5 0 5 5v37L42 54H12q-5 0-5-5V7q0-5 5-5z" /><path d="M13 16h34M13 23h34M13 30h34M13 37h23" /></svg>
        <span>下单</span>
      </button>
      <button class="plain">
        <svg width="60" height="56" viewBox="0 0 60 56" fill="none" stroke="#d6d6d6" stroke-width="3"><rect x="3" y="11" width="54" height="41" rx="5" /><path d="M19 5h23M30 21v20M20 31h20M11 54h9M40 54h9" /></svg>
        <span>诊股</span>
      </button>
      <button class="plain">
        <svg width="60" height="56" viewBox="0 0 60 56" fill="none" stroke="#d6d6d6" stroke-width="3"><rect x="7" y="4" width="47" height="47" /><path d="M17 28h26" /></svg>
        <span>删自选</span>
      </button>
      <button class="plain">
        <svg width="60" height="56" viewBox="0 0 60 56" fill="none" stroke="#d6d6d6" stroke-width="3"><circle cx="30" cy="28" r="24" /><path d="M19 21h22M19 35h22" /></svg>
        <span>功能</span>
      </button>
    </nav>
  </div>
</template>

<style>
body { background: #fff; }
</style>

<style scoped>
.page { font-family: Roboto, "Noto Sans CJK SC", sans-serif; color: #2e2e2e; overflow: hidden; }
.page * { box-sizing: border-box; }
.plain { border: 0; padding: 0; margin: 0; background: none; font: inherit; color: inherit; white-space: nowrap; }
svg { display: block; flex: none; }
a { text-decoration: none; color: #5a8cd8; }

.top { height: 243px; background: #dd4440; color: #fff; }
.status { display: grid; grid-template-columns: 1fr 378px 1fr; align-items: center; padding-top: 16px; height: 100px; }
.clock { padding-left: 90px; font-size: 39px; font-weight: 500; }
.island { display: flex; align-items: center; justify-content: space-between; height: 84px; padding: 0 24px 0 22px; border-radius: 42px; background: #000; color: #cdced2; font-size: 33px; }
.signals { margin-left: 76px; }
.bar { display: grid; grid-template-columns: 1fr 434px 1fr; align-items: center; height: 143px; }
.back { justify-self: start; margin-left: 74px; }
.stock { display: flex; align-items: center; justify-content: space-between; }
.name { display: flex; flex-direction: column; align-items: center; }
h1 { margin: 0; font-size: 47px; line-height: 64px; font-weight: 500; padding-top: 5px; }
.code { display: flex; align-items: center; gap: 6px; width: 328px; height: 68px; overflow: hidden; font-size: 37px; font-weight: 500; }
.code span { margin-right: 5px; }
.code i { flex: none; font-style: normal; font-size: 28px; line-height: 32px; padding: 0 4px; border-radius: 4px; background: #d69253; color: #fdeed4; font-weight: 400; }
.code .cut { margin-left: 24px; }
.tools { display: flex; align-items: center; justify-content: flex-end; gap: 65px; padding-right: 53px; }

.quote { position: relative; display: grid; grid-template-columns: 227px repeat(3, 1fr); column-gap: 37px; height: 238px; padding: 18px 0 0 27px; }
.now { color: #45962e; white-space: nowrap; padding-top: 16px; }
.now strong { display: block; font-size: 78px; line-height: 100px; font-weight: 500; }
.now div { display: flex; gap: 26px; font-size: 37px; line-height: 50px; font-weight: 500; }
dl { margin: 0; }
dl div { display: flex; justify-content: space-between; height: 65px; line-height: 65px; white-space: nowrap; }
dt { font-size: 42px; color: #666; }
sup { font-size: 24px; line-height: 22px; vertical-align: 16px; }
dd { margin: 0; font-size: 40px; font-weight: 500; }
.green { color: #45962e; }
.corner { position: absolute; right: 8px; bottom: 15px; }

.periods { display: flex; align-items: center; gap: 74px; height: 108px; padding: 0 36px 0 37px; border-top: 12px solid #f4f4f4; border-bottom: 2px solid #e8e8e8; font-size: 41px; color: #666; }
.periods button { position: relative; line-height: 96px; }
.periods .on { color: #2b2b2b; font-weight: 700; }
.periods .on::after { content: ""; position: absolute; left: calc(50% - 18px); bottom: 2px; width: 36px; height: 9px; border-radius: 4px; background: #d2443b; }
.periods .more { display: flex; align-items: center; gap: 8px; }
.periods .set { margin-left: auto; }

.legend { display: flex; align-items: flex-start; height: 94px; padding: 9px 18px 0 18px; font-size: 30px; }
.legend p { flex: 1; margin: 0 0 0 16px; display: flex; flex-wrap: wrap; column-gap: 23px; align-content: flex-start; line-height: 41px; font-weight: 500; max-width: 780px; }
.legend .kind { font-size: 32px; font-weight: 400; }
.legend .m5 { color: #111; }
.legend .m10 { color: #d9a441; }
.legend .m20 { color: #d9687a; }
.legend .m30 { color: #7fbc58; }
.legend .m60 { color: #4476a6; }
.legend .m250 { color: #45184f; }
.legend > button { margin-left: auto; font-size: 33px; line-height: 41px; color: #444; }

.pick { display: flex; align-items: center; height: 48px; padding: 0 14px 0 12px; gap: 10px; border-radius: 6px; background: #f2f2f2; }
.pick select { appearance: none; border: 0; padding: 0; margin: 0; background: none; font: inherit; line-height: 48px; color: #2e2e2e; }
.small { height: 50px; margin-top: 13px; padding: 0 11px 0 10px; font-size: 33px; }

.box { display: grid; margin: 0 12px; border: 2px solid #ececec; }
.box > * { grid-area: 1 / 1; min-width: 0; }
.box > svg { width: 100%; height: auto; }
.price { overflow: hidden; }
.floats { align-self: end; display: flex; gap: 111px; padding: 0 0 7px 6px; }
.round { display: flex; align-items: center; justify-content: center; width: 72px; height: 72px; border-radius: 36px; background: rgb(228 228 228 / 70%); }
.dates { display: flex; justify-content: space-between; height: 35px; margin: 0 13px; font-size: 34px; line-height: 48px; color: #999; font-weight: 400; }

.over { padding: 10px 11px; font-size: 36px; }
.over .orange { display: block; line-height: 32px; }
.line { display: flex; align-items: center; height: 48px; }
.line > span { margin-right: 18px; white-space: nowrap; }
.line .pick { font-size: 37px; }
.help { margin: 0 17px 0 9px; }
.line a { margin-left: auto; white-space: nowrap; }
.red { color: #d2443b; }
.orange { color: #dd7e50; }
.dark { color: #436b2c; }
.volume { margin-top: 10px; border-bottom: 0; }
.vol { font-size: 34px; }
.vol .pick { margin-right: 13px; padding: 0 14px 0 11px; font-size: 36px; }
.line.vol > span { margin-right: 20px; }
.line b { font-weight: 400; color: #5fa8e0; }

.sections { display: flex; align-items: center; gap: 66px; height: 132px; margin-top: 4px; padding-left: 45px; border-top: 12px solid #f4f4f4; border-bottom: 2px solid #c9c9c9; font-size: 45px; color: #666; overflow: hidden; }
.sections button { position: relative; line-height: 118px; }
.sections .on { margin: 0 -5px; font-size: 50px; font-weight: 700; color: #2b2b2b; }
.sections .on::after { content: ""; position: absolute; left: calc(50% - 29px); bottom: 0; width: 58px; height: 12px; border-radius: 6px; background: #e64c3d; }
.sections .last { background: linear-gradient(90deg, #aaa, #fff 42px); background-clip: text; color: transparent; }

.flow { display: flex; align-items: center; padding: 68px 55px 79px 48px; line-height: 44px; }
h2 { display: flex; align-items: center; gap: 25px; margin: 0 28px 0 0; font-size: 42px; }
h2::before { content: ""; width: 6px; height: 36px; background: #d2443b; }
.flow a { display: flex; align-items: center; gap: 21px; margin-left: auto; font-size: 36px; }
.cards { display: flex; gap: 50px; height: 3px; padding: 0 56px; overflow: hidden; }
.cards div { flex: 1; height: 40px; border-radius: 12px; background: #f5f5f5; }

.dock { display: grid; grid-template-columns: 257px repeat(4, 1fr); height: 152px; background: #242424; color: #d6d6d6; font-size: 35px; }
.dock button { display: flex; flex-direction: column; align-items: center; padding-top: 21px; line-height: 42px; gap: 9px; }
.dock .index { padding-top: 11px; gap: 14px; font-size: 35px; color: #aaa; line-height: 46px; }
.dock em { font-style: normal; color: #7fe85a; }
</style>
